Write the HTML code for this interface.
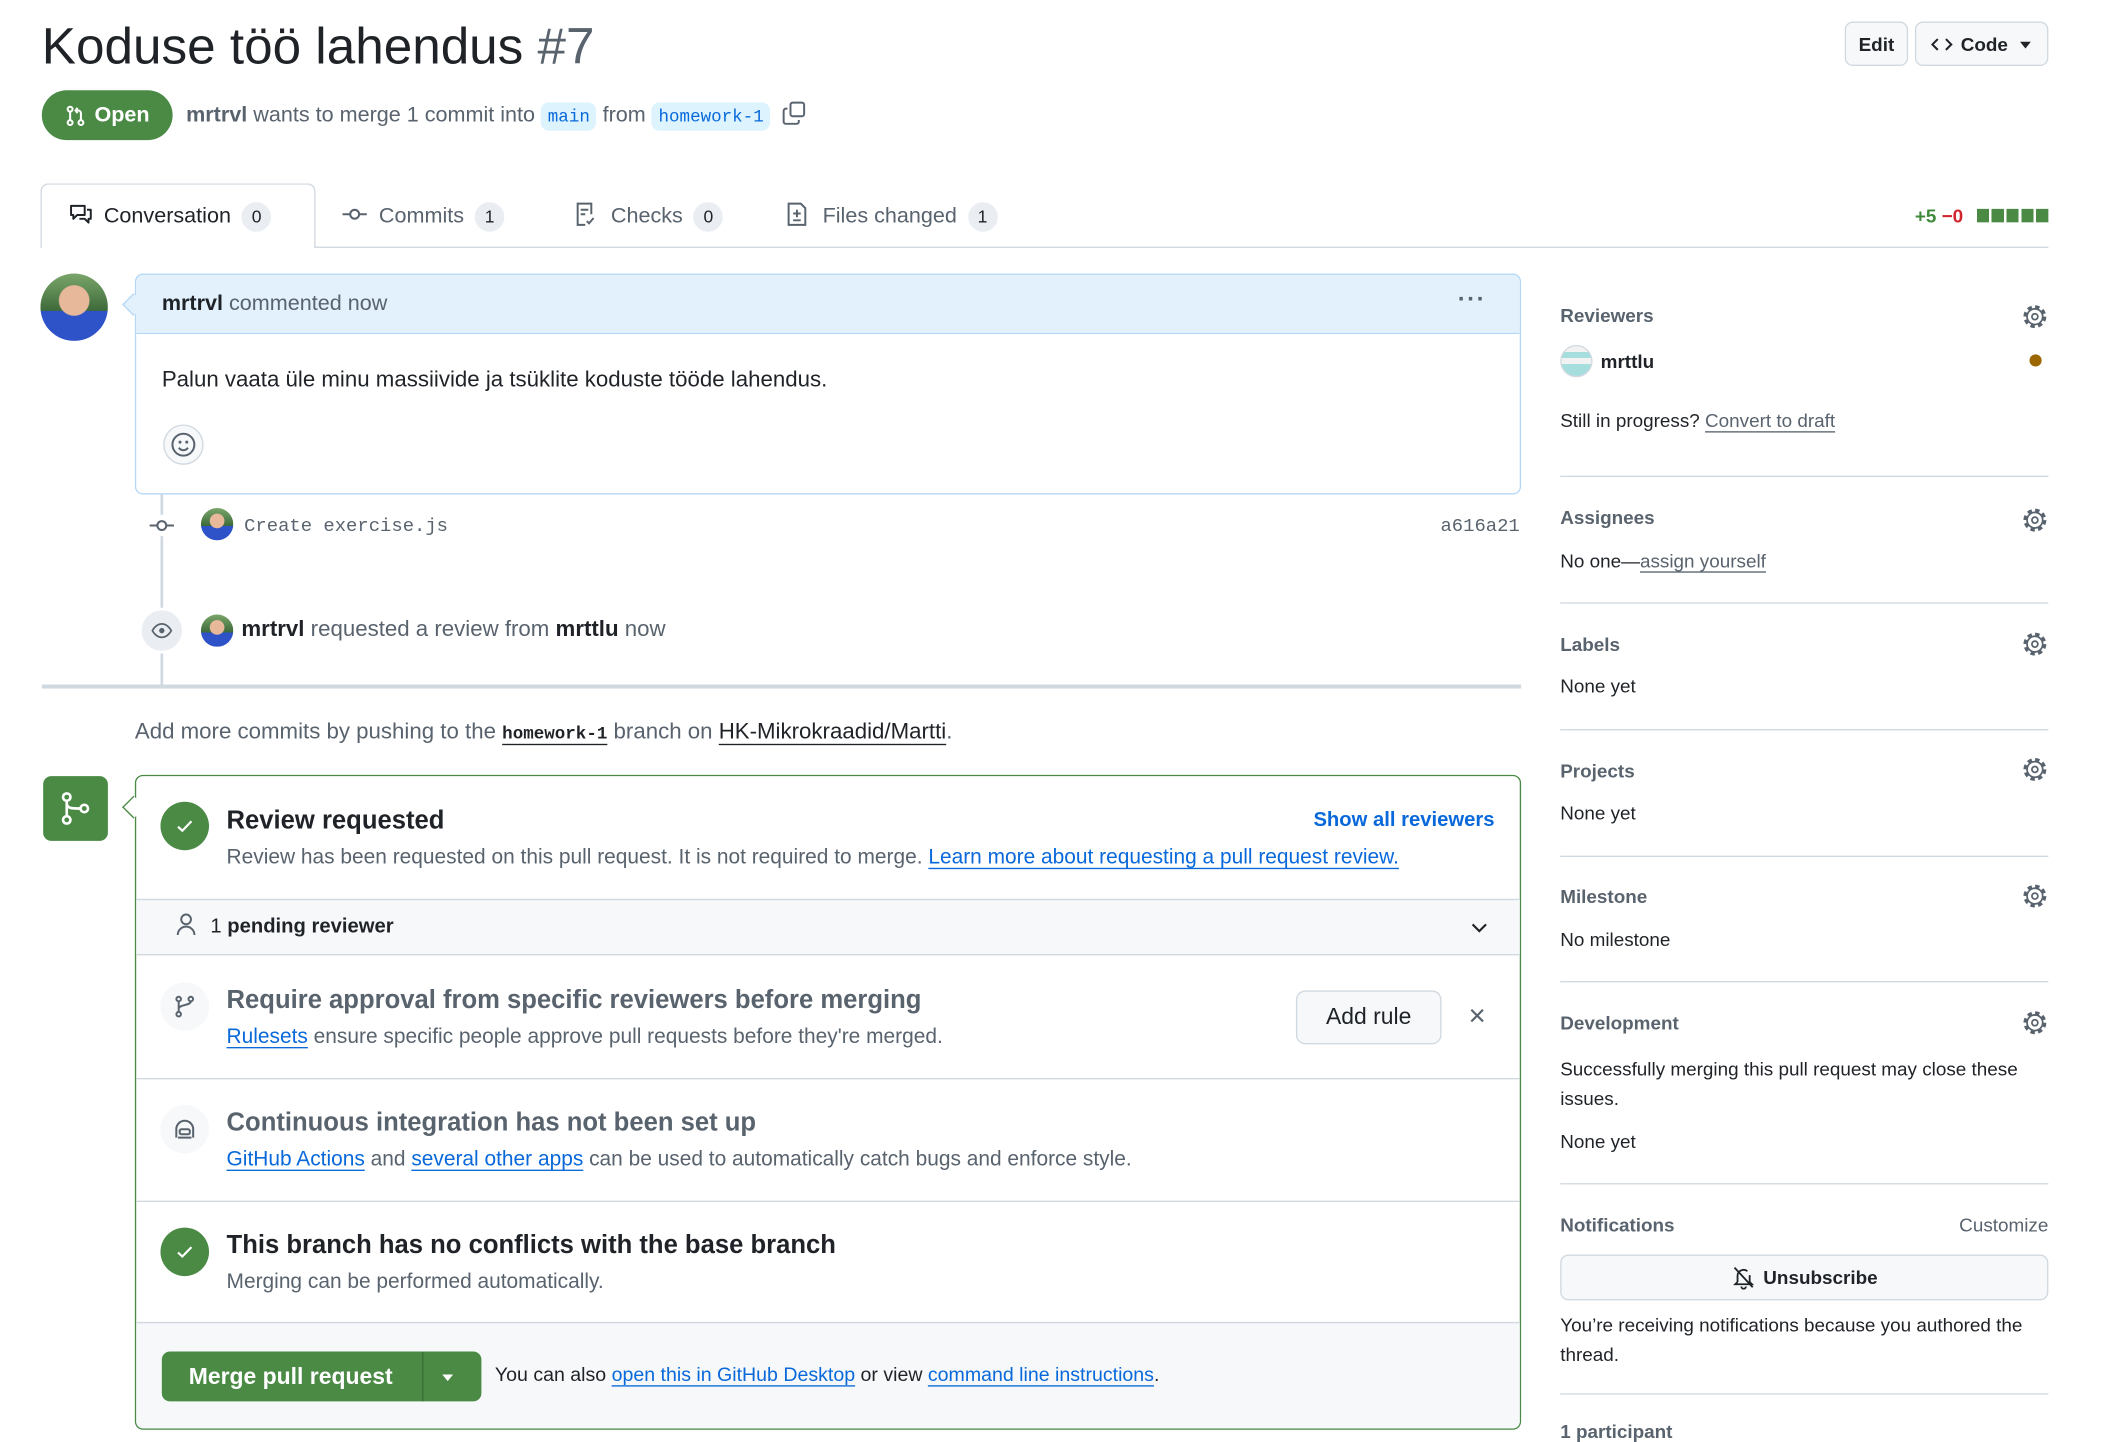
<!DOCTYPE html>
<html><head><meta charset="utf-8"><style>
*{box-sizing:border-box;margin:0;padding:0}
html,body{width:2113px;height:1431px;overflow:hidden;background:#fff}
#s{position:absolute;left:0;top:0;width:1550px;height:1062px;transform:scale(1.3485,1.3475);transform-origin:0 0;font-family:"Liberation Sans",sans-serif;color:#1f2328;font-size:16px}
.a{position:absolute;white-space:nowrap}
.g{color:#59636e}
.b{font-weight:bold}
.mono{font-family:"Liberation Mono",monospace}
.lnk{color:#0969da;text-decoration:underline;text-underline-offset:3px}
.btn{position:absolute;border:1px solid #d1d9e0;background:#f6f8fa;border-radius:6px;font-size:14px;font-weight:bold;display:flex;align-items:center;justify-content:center}
.cnt{display:inline-block;background:#eaeef2;border-radius:12px;min-width:22px;height:22px;line-height:22px;text-align:center;font-size:13px;margin-left:8px;color:#1f2328}
.hr{position:absolute;left:1157px;width:362px;height:1px;background:#d1d9e0}
.sh{position:absolute;left:1157px;font-size:14px;color:#59636e;font-weight:bold}
.st{position:absolute;left:1157px;font-size:14px;color:#1f2328}
.gear{position:absolute;left:1499px;width:20px;height:20px}
.av{position:absolute;border-radius:50%;background:radial-gradient(circle at 50% 40%,#e8b89a 0 28%,transparent 30%),linear-gradient(#7aa66b 0,#3e6a3a 55%,#2e52c8 56%);}
.ic{position:absolute;width:36px;height:36px;border-radius:50%;background:#f6f8fa}
.ok{position:absolute;width:36px;height:36px;border-radius:50%;background:#4a8a45}
</style></head><body><div id="s">
<svg width="0" height="0" style="position:absolute"><defs><g id="gr"><circle cx="10" cy="10" r="7.2" stroke="#59636e" stroke-width="2.6" fill="none" stroke-dasharray="3.2 2.45"/><circle cx="10" cy="10" r="5.8" stroke="#59636e" stroke-width="1.3" fill="#fff"/><circle cx="10" cy="10" r="2.2" stroke="#59636e" stroke-width="1.3" fill="none"/></g></defs></svg>

<div class="a" style="left:31px;top:13px;font-size:38px;line-height:44px">Koduse töö lahendus <span class="g">#7</span></div>
<div class="btn" style="left:1368px;top:16px;width:47px;height:33px">Edit</div>
<div class="btn" style="left:1420px;top:16px;width:99px;height:33px"><svg width="16" height="16" viewBox="0 0 16 16" style="margin-right:6px"><path d="M5 4L1 8l4 4M11 4l4 4-4 4" stroke="#1f2328" stroke-width="1.5" fill="none"/></svg>Code<svg width="10" height="10" viewBox="0 0 10 10" style="margin-left:8px"><path d="M1 3h8L5 8z" fill="#1f2328"/></svg></div>

<div class="a" style="left:31px;top:67px;width:97px;height:37px;border-radius:19px;background:#4a8a45;color:#fff;font-weight:bold;font-size:16px;display:flex;align-items:center;justify-content:center"><svg width="16" height="16" viewBox="0 0 16 16" style="margin-right:6px"><g stroke="#fff" stroke-width="1.5" fill="none"><circle cx="4" cy="3" r="1.8"/><circle cx="4" cy="13" r="1.8"/><circle cx="12" cy="13" r="1.8"/><path d="M4 5v6M12 11V6a2 2 0 0 0-2-2H8M9.5 2L8 4l1.5 2"/></g></svg>Open</div>
<div class="a g" style="left:138px;top:75px;font-size:16px;line-height:20px"><span class="b" style="color:#59636e">mrtrvl</span> wants to merge 1 commit into <span class="mono" style="background:#ddf4ff;color:#0969da;font-size:13px;padding:3px 5px;border-radius:6px">main</span> from <span class="mono" style="background:#ddf4ff;color:#0969da;font-size:13px;padding:3px 5px;border-radius:6px">homework-1</span> <svg width="18" height="18" viewBox="0 0 16 16" style="vertical-align:-3px;margin-left:4px"><g stroke="#59636e" stroke-width="1.3" fill="none"><rect x="5.5" y="1" width="9" height="9" rx="1.5"/><path d="M3.5 5H2.5A1.5 1.5 0 0 0 1 6.5v7A1.5 1.5 0 0 0 2.5 15h7a1.5 1.5 0 0 0 1.5-1.5v-1"/></g></svg></div>

<div class="a" style="left:31px;top:183px;width:1488px;height:1px;background:#d1d9e0"></div>
<div class="a" style="left:30px;top:136px;width:204px;height:48px;border:1px solid #d1d9e0;border-bottom:none;border-radius:6px 6px 0 0;background:#fff"></div>
<div class="a" style="left:51px;top:150px;font-size:16px;line-height:22px"><svg width="18" height="18" viewBox="0 0 16 16" style="vertical-align:-3px;margin-right:8px"><path d="M1.5 2.5h9v6h-5l-2.5 2.5v-2.5h-1.5zM12 5h2.5v6H13v2.5L10.5 11H7" stroke="#1f2328" stroke-width="1.3" fill="none" stroke-linejoin="round"/></svg>Conversation<span class="cnt">0</span></div>
<div class="a g" style="left:253px;top:150px;font-size:16px;line-height:22px"><svg width="20" height="14" viewBox="0 0 20 14" style="vertical-align:-1px;margin-right:8px"><circle cx="10" cy="7" r="3.3" stroke="#59636e" stroke-width="1.5" fill="none"/><path d="M1 7h5.7M13.3 7H19" stroke="#59636e" stroke-width="1.5"/></svg>Commits<span class="cnt">1</span></div>
<div class="a g" style="left:425px;top:150px;font-size:16px;line-height:22px"><svg width="18" height="18" viewBox="0 0 16 16" style="vertical-align:-3px;margin-right:10px"><path d="M8 15H3V1h9v7M5 5h5M5 8h3M9 12.5l1.5 1.5 3-3.5" stroke="#59636e" stroke-width="1.3" fill="none"/></svg>Checks<span class="cnt">0</span></div>
<div class="a g" style="left:582px;top:150px;font-size:16px;line-height:22px"><svg width="18" height="18" viewBox="0 0 16 16" style="vertical-align:-3px;margin-right:10px"><path d="M2.5 1h8l3 3v11h-11zM8 5v5M5.5 7.5h5M5.5 12h5" stroke="#59636e" stroke-width="1.3" fill="none"/></svg>Files changed<span class="cnt">1</span></div>
<div class="a" style="left:1420px;top:151px;font-size:14px;font-weight:bold;line-height:18px"><span style="color:#3f8a3a">+5</span> <span style="color:#d1242f">−0</span></div>
<div class="a" style="left:1466px;top:155px;width:53px;height:10px;background:repeating-linear-gradient(90deg,#4a8a45 0 9px,#fff 9px 11px)"></div>

<div class="av" style="left:30px;top:203px;width:50px;height:50px"></div>
<div class="a" style="left:100px;top:203px;width:1028px;height:164px;border:1px solid #b6d7f5;border-radius:6px;background:#fff"></div>
<div class="a" style="left:101px;top:204px;width:1026px;height:44px;background:#e2f1fb;border-bottom:1px solid #b6d7f5;border-radius:5px 5px 0 0"></div>
<div class="a" style="left:93px;top:220px;width:12px;height:12px;background:#e2f1fb;border-left:1px solid #b6d7f5;border-bottom:1px solid #b6d7f5;transform:rotate(45deg)"></div>
<div class="a" style="left:120px;top:216px;font-size:16px;line-height:20px"><span class="b">mrtrvl</span> <span class="g">commented now</span></div>
<div class="a g" style="left:1081px;top:212px;font-size:18px;font-weight:bold;letter-spacing:1px">···</div>
<div class="a" style="left:120px;top:272px;font-size:16.5px;line-height:20px">Palun vaata üle minu massiivide ja tsüklite koduste tööde lahendus.</div>
<div class="a" style="left:121px;top:315px;width:30px;height:30px;border-radius:50%;background:#f6f8fa;border:1px solid #d1d9e0"></div>
<svg class="a" style="left:126px;top:320px" width="20" height="20" viewBox="0 0 16 16"><g stroke="#59636e" stroke-width="1.2" fill="none"><circle cx="8" cy="8" r="6.5"/><path d="M5.3 9.8a3.2 3.2 0 0 0 5.4 0"/></g><circle cx="6" cy="6.5" r=".9" fill="#59636e"/><circle cx="10" cy="6.5" r=".9" fill="#59636e"/></svg>

<div class="a" style="left:119px;top:367px;width:2px;height:142px;background:#d1d9e0"></div>
<svg class="a" style="left:110px;top:382px" width="20" height="16" viewBox="0 0 20 16"><rect x="0" y="0" width="20" height="16" fill="#fff"/><circle cx="10" cy="8" r="3.3" stroke="#59636e" stroke-width="1.5" fill="#fff"/><path d="M1 8h5.7M13.3 8H19" stroke="#59636e" stroke-width="1.5"/></svg>
<div class="av" style="left:149px;top:377px;width:24px;height:24px"></div>
<div class="a mono g" style="left:181px;top:382px;font-size:14px;line-height:18px">Create exercise.js</div>
<div class="a mono g" style="left:1060px;top:382px;font-size:14px;line-height:18px;width:67px;text-align:right">a616a21</div>
<div class="a" style="left:103px;top:451px;width:34px;height:34px;border-radius:50%;background:#eaeef2;border:2px solid #fff"></div>
<svg class="a" style="left:111px;top:460px" width="18" height="16" viewBox="0 0 16 16"><path d="M1 8s2.5-5 7-5 7 5 7 5-2.5 5-7 5-7-5-7-5z" stroke="#59636e" stroke-width="1.3" fill="none"/><circle cx="8" cy="8" r="2" fill="#59636e"/></svg>
<div class="av" style="left:149px;top:456px;width:24px;height:24px"></div>
<div class="a" style="left:179px;top:457px;font-size:16.5px;line-height:20px"><span class="b">mrtrvl</span> <span class="g">requested a review from</span> <span class="b">mrttlu</span> <span class="g">now</span></div>
<div class="a" style="left:31px;top:508px;width:1097px;height:3px;background:#d1d9e0"></div>

<div class="a g" style="left:100px;top:533px;font-size:16.5px;line-height:20px">Add more commits by pushing to the <span class="mono b" style="color:#1f2328;font-size:13px;text-decoration:underline;text-underline-offset:4px">homework-1</span> branch on <span style="color:#1f2328;text-decoration:underline;text-underline-offset:4px">HK-Mikrokraadid/Martti</span>.</div>

<div class="a" style="left:32px;top:576px;width:48px;height:48px;border-radius:6px;background:#4a8a45"></div>
<svg class="a" style="left:43px;top:587px" width="26" height="26" viewBox="0 0 16 16"><g stroke="#fff" stroke-width="1.2" fill="none"><circle cx="4" cy="2.8" r="1.7"/><circle cx="4" cy="13.2" r="1.7"/><circle cx="12" cy="8" r="1.7"/><path d="M4 4.5v7M4 5.5c0 2.5 2 2.5 6.3 2.5"/></g></svg>
<div class="a" style="left:100px;top:575px;width:1028px;height:486px;border:1px solid #4a8a45;border-radius:6px;background:#fff;overflow:hidden">
  <div style="position:absolute;left:0;top:91px;width:1028px;height:42px;background:#f6f8fa;border-top:1px solid #d1d9e0;border-bottom:1px solid #d1d9e0"></div>
  <div style="position:absolute;left:0;top:224px;width:1028px;height:1px;background:#d1d9e0"></div>
  <div style="position:absolute;left:0;top:315px;width:1028px;height:1px;background:#d1d9e0"></div>
  <div style="position:absolute;left:0;top:405px;width:1028px;height:80px;background:#f6f8fa;border-top:1px solid #d1d9e0"></div>
</div>
<div class="a" style="left:93px;top:593px;width:12px;height:12px;background:#fff;border-left:1px solid #4a8a45;border-bottom:1px solid #4a8a45;transform:rotate(45deg)"></div>

<div class="ok" style="left:119px;top:595px"></div>
<svg class="a" style="left:129px;top:605px" width="16" height="16" viewBox="0 0 16 16"><path d="M3 8.5l3.2 3L13 4.5" stroke="#fff" stroke-width="1.6" fill="none"/></svg>
<div class="a" style="left:168px;top:598px;font-size:19px;font-weight:bold;line-height:24px">Review requested</div>
<div class="a g" style="left:168px;top:627px;font-size:15.5px;line-height:19px">Review has been requested on this pull request. It is not required to merge. <span class="lnk">Learn more about requesting a pull request review.</span></div>
<div class="a" style="left:974px;top:599px;font-size:15px;font-weight:bold;color:#0969da;line-height:19px">Show all reviewers</div>
<svg class="a" style="left:129px;top:677px" width="18" height="18" viewBox="0 0 16 16"><path d="M8 1.5a3.2 3.2 0 1 1 0 6.4 3.2 3.2 0 0 1 0-6.4zM2.5 15a5.5 5.5 0 0 1 11 0" stroke="#59636e" stroke-width="1.3" fill="none"/></svg>
<div class="a" style="left:156px;top:678px;font-size:15px;line-height:19px;font-weight:bold;color:#1f2328"><span style="font-weight:normal">1</span> pending reviewer</div>
<svg class="a" style="left:1089px;top:680px" width="16" height="16" viewBox="0 0 16 16"><path d="M3 6l5 5 5-5" stroke="#1f2328" stroke-width="1.6" fill="none"/></svg>

<div class="ic" style="left:119px;top:729px"></div>
<svg class="a" style="left:128px;top:738px" width="18" height="18" viewBox="0 0 16 16"><g stroke="#59636e" stroke-width="1.3" fill="none"><circle cx="4" cy="13" r="1.5"/><circle cx="4" cy="3" r="1.5"/><circle cx="12" cy="3" r="1.5"/><path d="M4 4.5v7M12 4.5c0 3-8 2-8 5"/></g></svg>
<div class="a g" style="left:168px;top:731px;font-size:19px;font-weight:bold;line-height:24px">Require approval from specific reviewers before merging</div>
<div class="a g" style="left:168px;top:760px;font-size:15.5px;line-height:19px"><span class="lnk">Rulesets</span> ensure specific people approve pull requests before they're merged.</div>
<div class="btn" style="left:961px;top:735px;width:108px;height:40px;font-size:17px;font-weight:normal;border-radius:7px">Add rule</div>
<div class="a g" style="left:1089px;top:742px;font-size:22px;line-height:24px">×</div>

<div class="ic" style="left:119px;top:820px"></div>
<svg class="a" style="left:127px;top:828px" width="20" height="20" viewBox="0 0 16 16"><g stroke="#59636e" stroke-width="1.2" fill="none"><path d="M3 13V8a5 5 0 0 1 10 0v5"/><rect x="5" y="8" width="6" height="3" rx="1"/><path d="M4 13h8"/></g></svg>
<div class="a g" style="left:168px;top:822px;font-size:19px;font-weight:bold;line-height:24px">Continuous integration has not been set up</div>
<div class="a g" style="left:168px;top:851px;font-size:15.5px;line-height:19px"><span class="lnk">GitHub Actions</span> and <span class="lnk">several other apps</span> can be used to automatically catch bugs and enforce style.</div>

<div class="ok" style="left:119px;top:911px"></div>
<svg class="a" style="left:129px;top:921px" width="16" height="16" viewBox="0 0 16 16"><path d="M3 8.5l3.2 3L13 4.5" stroke="#fff" stroke-width="1.6" fill="none"/></svg>
<div class="a" style="left:168px;top:913px;font-size:19px;font-weight:bold;line-height:24px">This branch has no conflicts with the base branch</div>
<div class="a g" style="left:168px;top:942px;font-size:15.5px;line-height:19px">Merging can be performed automatically.</div>

<div class="a" style="left:120px;top:1003px;width:237px;height:37px;border-radius:6px;background:#4a8a45;color:#fff;font-size:17px;font-weight:bold"><span style="position:absolute;left:20px;top:9px">Merge pull request</span><span style="position:absolute;left:193px;top:0;width:1px;height:37px;background:#3a7036"></span><svg style="position:absolute;left:207px;top:14px" width="10" height="10" viewBox="0 0 10 10"><path d="M1 3h8L5 8z" fill="#fff"/></svg></div>
<div class="a" style="left:367px;top:1012px;font-size:14.5px;line-height:18px">You can also <span class="lnk">open this in GitHub Desktop</span> or view <span class="lnk">command line instructions</span>.</div>

<div class="sh" style="top:226px">Reviewers</div>
<svg class="gear" style="top:225px" viewBox="0 0 20 20"><use href="#gr"/></svg>
<div class="a" style="left:1157px;top:256px;width:24px;height:24px;border-radius:50%;background:linear-gradient(#f2f2f2 0 20%,#a6dede 20% 40%,#f2f2f2 40% 60%,#a6dede 60%);border:1px solid #d1d9e0"></div>
<div class="a b" style="left:1187px;top:259px;font-size:14px;line-height:18px">mrttlu</div>
<div class="a" style="left:1505px;top:263px;width:9px;height:9px;border-radius:50%;background:#9a6700"></div>
<div class="st" style="top:304px">Still in progress? <span class="g" style="text-decoration:underline;text-underline-offset:3px">Convert to draft</span></div>
<div class="hr" style="top:353px"></div>
<div class="sh" style="top:376px">Assignees</div>
<svg class="gear" style="top:376px" viewBox="0 0 20 20"><use href="#gr"/></svg>
<div class="st" style="top:408px">No one—<span class="g" style="text-decoration:underline;text-underline-offset:3px">assign yourself</span></div>
<div class="hr" style="top:447px"></div>
<div class="sh" style="top:470px">Labels</div>
<svg class="gear" style="top:468px" viewBox="0 0 20 20"><use href="#gr"/></svg>
<div class="st" style="top:501px">None yet</div>
<div class="hr" style="top:541px"></div>
<div class="sh" style="top:564px">Projects</div>
<svg class="gear" style="top:561px" viewBox="0 0 20 20"><use href="#gr"/></svg>
<div class="st" style="top:595px">None yet</div>
<div class="hr" style="top:635px"></div>
<div class="sh" style="top:657px">Milestone</div>
<svg class="gear" style="top:655px" viewBox="0 0 20 20"><use href="#gr"/></svg>
<div class="st" style="top:689px">No milestone</div>
<div class="hr" style="top:728px"></div>
<div class="sh" style="top:751px">Development</div>
<svg class="gear" style="top:749px" viewBox="0 0 20 20"><use href="#gr"/></svg>
<div class="st" style="top:782px;line-height:22px;width:362px;white-space:normal">Successfully merging this pull request may close these issues.</div>
<div class="st" style="top:839px">None yet</div>
<div class="hr" style="top:878px"></div>
<div class="sh" style="top:901px">Notifications</div>
<div class="a g" style="left:1400px;top:901px;font-size:14px;width:119px;text-align:right">Customize</div>
<div class="btn" style="left:1157px;top:931px;width:362px;height:34px;font-size:14px"><svg width="18" height="18" viewBox="0 0 16 16" style="margin-right:6px"><g stroke="#1f2328" stroke-width="1.2" fill="none"><path d="M4 11V7a4 4 0 0 1 6.5-3.1M12 6.5V11l1.5 1.5H2.5L4 11M6.5 14a1.5 1.5 0 0 0 3 0M2 1.5l12 13"/></g></svg>Unsubscribe</div>
<div class="st g" style="top:972px;line-height:22px;width:362px;white-space:normal">You’re receiving notifications because you authored the thread.</div>
<div class="hr" style="top:1034px"></div>
<div class="sh" style="top:1054px">1 participant</div>

</div></body></html>
